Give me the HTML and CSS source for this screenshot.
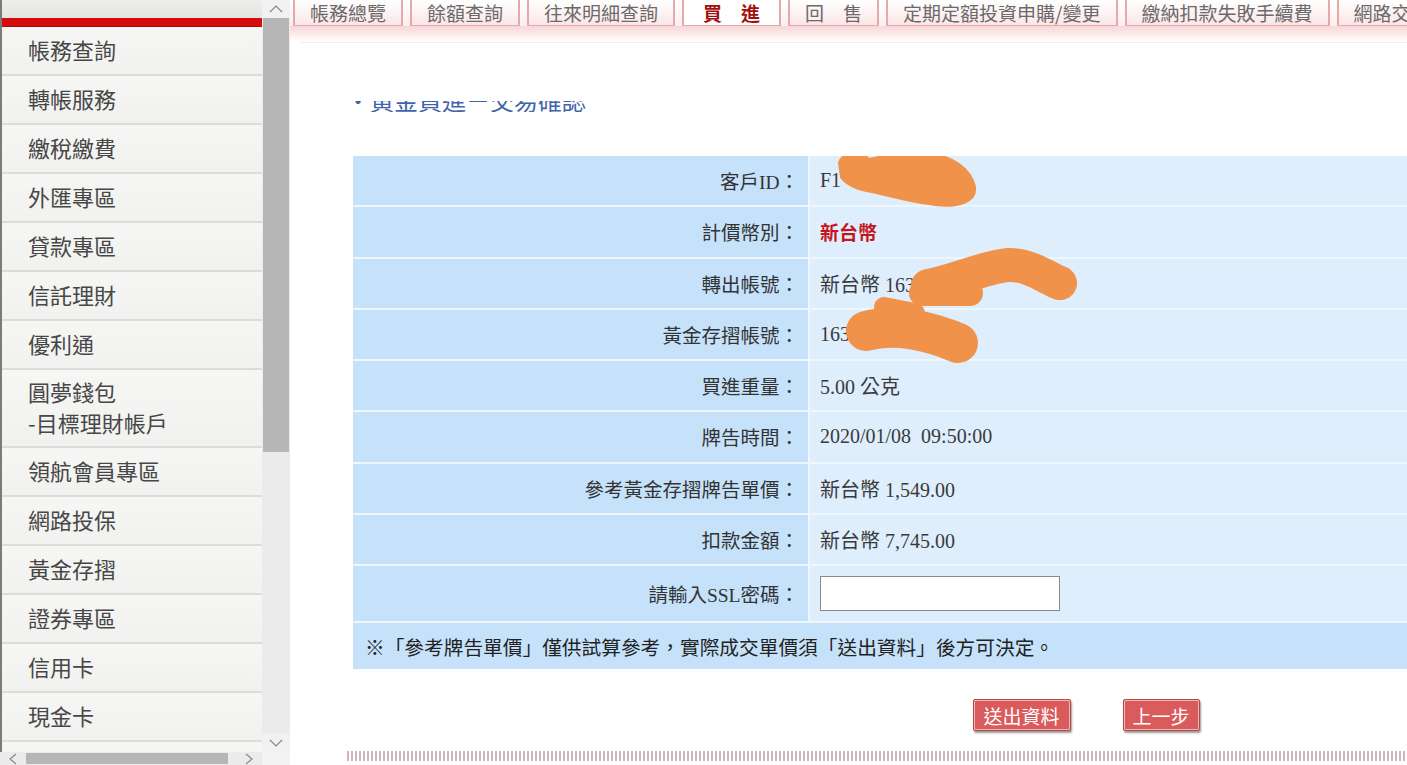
FILE: index.html
```html
<!DOCTYPE html>
<html lang="zh-Hant">
  <head>
    <meta charset="UTF-8" />
    <meta name="viewport" content="width=device-width, initial-scale=1.0" />
    <title>黃金買進 - 交易確認</title>
    <link rel="stylesheet" href="styles.css">
  </head>
  <body>
    <div class="page">
      <!-- Menú lateral -->
      <aside class="side">
        <div class="menu-col">
          <div class="menu-top"></div>
          <div class="menu-red"></div>
          <ul class="menu">
            <li>帳務查詢</li>
            <li>轉帳服務</li>
            <li>繳稅繳費</li>
            <li>外匯專區</li>
            <li>貸款專區</li>
            <li>信託理財</li>
            <li>優利通</li>
            <li class="two-line">圓夢錢包<br />-目標理財帳戶</li>
            <li>領航會員專區</li>
            <li>網路投保</li>
            <li>黃金存摺</li>
            <li>證券專區</li>
            <li>信用卡</li>
            <li>現金卡</li>
            <li>&nbsp;</li>
          </ul>
        </div>

        <div class="vbar">
          <div class="vb-btn">
            <svg width="14" height="8" viewBox="0 0 14 8"><path d="M1 7 L7 1 L13 7" fill="none" stroke="#888" stroke-width="1.2" /></svg>
          </div>
          <div class="vb-thumb"></div>
          <div class="vb-track"></div>
          <div class="vb-btn">
            <svg width="14" height="8" viewBox="0 0 14 8"><path d="M1 1 L7 7 L13 1" fill="none" stroke="#888" stroke-width="1.2" /></svg>
          </div>
        </div>

        <div class="hbar">
          <div class="hb-btn">
            <svg width="8" height="12" viewBox="0 0 8 12"><path d="M7 1 L1 6 L7 11" fill="none" stroke="#888" stroke-width="1.2" /></svg>
          </div>
          <div class="hb-thumb"></div>
          <div class="hb-track"></div>
          <div class="hb-btn">
            <svg width="8" height="12" viewBox="0 0 8 12"><path d="M1 1 L7 6 L1 11" fill="none" stroke="#888" stroke-width="1.2" /></svg>
          </div>
        </div>
        <div class="corner"></div>
      </aside>

      <!-- Contenido -->
      <main class="main">
        <nav class="tabs">
          <span class="tab">帳務總覽</span>
          <span class="tab">餘額查詢</span>
          <span class="tab">往來明細查詢</span>
          <span class="tab on">買　進</span>
          <span class="tab">回　售</span>
          <span class="tab">定期定額投資申購/變更</span>
          <span class="tab">繳納扣款失敗手續費</span>
          <span class="tab">網路交易服務</span>
        </nav>
        <div class="tab-fade"></div>
        <div class="rule"></div>

        <div class="title-clip">
          <h2 class="title">‧黃金買進－交易確認</h2>
        </div>

        <div class="form-wrap">
          <div class="trade">
            <div class="lbl">客戶ID：</div>
            <div class="val">F1</div>
            <div class="lbl">計價幣別：</div>
            <div class="val red">新台幣</div>
            <div class="lbl">轉出帳號：</div>
            <div class="val">新台幣 163</div>
            <div class="lbl">黃金存摺帳號：</div>
            <div class="val">1630</div>
            <div class="lbl">買進重量：</div>
            <div class="val">5.00 公克</div>
            <div class="lbl">牌告時間：</div>
            <div class="val">2020/01/08&nbsp;&nbsp;09:50:00</div>
            <div class="lbl">參考黃金存摺牌告單價：</div>
            <div class="val">新台幣 1,549.00</div>
            <div class="lbl">扣款金額：</div>
            <div class="val">新台幣 7,745.00</div>
            <div class="lbl">請輸入SSL密碼：</div>
            <div class="val"><input class="pwd" type="password" /></div>
            <div class="note">※「參考牌告單價」僅供試算參考，實際成交單價須「送出資料」後方可決定。</div>
          </div>

          <!-- Tachones naranjas sobre los datos personales -->
          <svg class="scribble" width="1466" height="520" viewBox="0 0 1466 520">
            <g transform="translate(-353,-155)" fill="#f0924a" stroke="#f0924a" stroke-linecap="round" stroke-linejoin="round">
              <path d="M840 162 C 842 152, 862 150, 868 159 C 885 156, 905 151, 928 153 C 952 156, 970 168, 974 186 C 976 200, 958 206, 935 203 C 910 200, 888 194, 872 190 C 860 188, 848 184, 842 176 Z" stroke-width="4" />
              <path d="M928 285 C 955 280, 985 266, 1008 264 C 1030 263, 1048 278, 1060 282" fill="none" stroke-width="34" />
              <path d="M922 292 L 970 292" fill="none" stroke-width="26" />
              <path d="M866 330 C 895 322, 930 330, 958 342" fill="none" stroke-width="40" />
              <path d="M884 306 L 915 312" fill="none" stroke-width="20" />
            </g>
          </svg>
        </div>

        <div class="actions">
          <button class="btn-red send">送出資料</button>
          <button class="btn-red back">上一步</button>
        </div>

        <div class="stripe"></div>
      </main>
    </div>
  </body>
</html>
```

FILE: styles.css
```css
body {
  margin: 0;
  padding: 0;
  font-family: "Noto Sans CJK TC", sans-serif;
  background-color: #fff;
  overflow: hidden;
}

.page {
  display: flex;
  height: 100vh;
}

/* Menú lateral */
.side {
  width: 290px;
  flex: none;
  display: grid;
  grid-template-columns: 262px 28px;
  grid-template-rows: 1fr 13px;
}

.menu-col {
  overflow: hidden;
  border-left: 2px solid #7b7b7b;
  background-color: #f3f3f1;
}

.menu-top {
  height: 18px;
  background: linear-gradient(#eeeeec, #e3e3e1);
}

.menu-red {
  height: 8px;
  background-color: #d60b0b;
  border-bottom: 1px solid #a80808;
}

.menu {
  list-style: none;
  margin: 0;
  padding: 0;
}

.menu li {
  height: 45px;
  line-height: 45px;
  padding-bottom: 2px;
  padding-left: 26px;
  font-size: 22px;
  color: #474747;
  border-bottom: 2px solid #dcdcda;
  background: linear-gradient(#f6f6f4, #f1f1ef);
  white-space: nowrap;
}

.menu li.two-line {
  height: auto;
  line-height: 31px;
  padding-top: 6px;
  padding-bottom: 8px;
}

/* Barras de desplazamiento */
.vbar {
  display: flex;
  flex-direction: column;
  background-color: #ebebeb;
}

.vb-btn {
  height: 18px;
  display: flex;
  align-items: center;
  justify-content: center;
  background-color: #f1f1f1;
}

.vb-thumb {
  height: 434px;
  margin: 0 1px;
  background-color: #b6b6b6;
}

.vb-track {
  flex: 1;
}

.hbar {
  display: flex;
  align-items: stretch;
  background-color: #ebebeb;
}

.hb-btn {
  width: 26px;
  display: flex;
  align-items: center;
  justify-content: center;
}

.hb-thumb {
  width: 202px;
  margin: 1px 0;
  background-color: #b6b6b6;
}

.hb-track {
  flex: 1;
}

.corner {
  background-color: #f3f3f3;
}

/* Contenido */
.main {
  flex: 1;
  min-width: 0;
  overflow: hidden;
}

.tabs {
  display: flex;
  gap: 7px;
  padding-left: 3px;
  height: 26px;
  white-space: nowrap;
  background: linear-gradient(#fff, #fbeeee);
}

.tab {
  flex: none;
  padding: 0 15px;
  font-size: 19px;
  line-height: 25px;
  color: #6a6a6a;
  border: 2px solid #e6a9a9;
  border-top: 0;
  border-bottom-width: 1px;
  background: linear-gradient(#fff, #fbe6e6);
}

.tab.on {
  padding: 0 19px;
  color: #a20f0f;
  font-weight: bold;
  background: #fff;
}

.tab-fade {
  height: 16px;
  background: linear-gradient(#f7d6d6, #fff);
}

.rule {
  height: 1px;
  margin-left: 10px;
  background-color: #efefef;
}

.title-clip {
  height: 11px;
  margin-top: 58px;
  margin-left: 56px;
  overflow: hidden;
}

.title {
  margin: -13px 0 0;
  font-size: 24px;
  line-height: 24px;
  font-weight: normal;
  color: #4264ab;
  white-space: nowrap;
}

/* Tabla de confirmación */
.form-wrap {
  position: relative;
  margin-top: 44px;
  margin-left: 63px;
  width: 1466px;
}

.trade {
  display: grid;
  grid-template-columns: 455px 1fr;
  grid-template-rows: repeat(8, 49.25px) 55px 46px;
  gap: 2px;
  background-color: #eef6fe;
  font-family: "Liberation Serif", "Noto Sans CJK TC", serif;
  font-size: 20px;
}

.lbl {
  display: flex;
  align-items: center;
  justify-content: flex-end;
  padding-right: 9px;
  background-color: #c6e2fb;
  color: #333;
  font-size: 19.5px;
}

.val {
  display: flex;
  align-items: center;
  padding-left: 10px;
  background-color: #dfeefd;
  color: #3a3a3a;
}

.val.red {
  color: #c4161c;
  font-weight: bold;
  font-family: "Noto Sans CJK TC", sans-serif;
  font-size: 19px;
}

.pwd {
  width: 238px;
  height: 33px;
  margin: 0;
  padding: 0;
  border: 1px solid #8a8a8a;
  background-color: #fff;
}

.note {
  grid-column: 1 / 3;
  display: flex;
  align-items: center;
  padding-left: 12px;
  background-color: #c6e2fb;
  color: #222;
  font-family: "Noto Sans CJK TC", sans-serif;
  font-size: 19.7px;
}

.scribble {
  position: absolute;
  left: 0;
  top: 0;
  pointer-events: none;
}

/* Botones */
.actions {
  display: flex;
  justify-content: center;
  gap: 52px;
  width: 1466px;
  margin-top: 30px;
  margin-left: 63px;
}

.btn-red {
  height: 32px;
  padding: 0;
  font-family: "Noto Sans CJK TC", sans-serif;
  font-size: 19px;
  color: #fff;
  background-color: #da5b5c;
  border: 1px solid #b44a4a;
  border-radius: 2px;
  box-shadow: inset 0 0 0 1px #f2b6b6, 1px 2px 2px #9a9a9a;
  cursor: pointer;
}

.send {
  width: 98px;
}

.back {
  width: 77px;
}

.stripe {
  height: 10px;
  margin-top: 20px;
  margin-left: 57px;
  background: repeating-linear-gradient(90deg, #cfb6be 0 2px, #fff 2px 4px);
}
```
